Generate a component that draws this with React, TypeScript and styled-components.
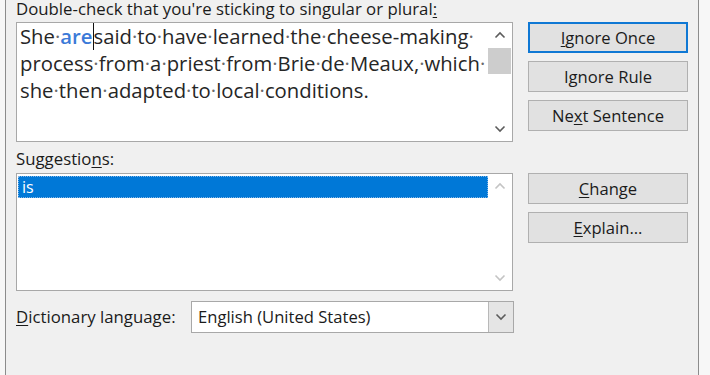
import React from 'react';
import styled, { createGlobalStyle } from 'styled-components';

const GlobalStyle = createGlobalStyle`
  html, body {
    margin: 0;
    padding: 0;
    background: #f7f7f7;
    overflow: hidden;
  }
  body {
    font-family: 'Open Sans', 'Noto Sans', sans-serif;
  }
`;

const Window = styled.div`
  margin-left: 5px;
  width: 694px;
  height: 375px;
  box-sizing: border-box;
  border-left: 1px solid #8c8c8c;
  border-right: 1px solid #8c8c8c;
  background: #f0f0f0;
  padding: 0 0 0 10px;
  color: #1b1b1b;
  font-size: 16px;
`;

const Label = styled.div`
  height: 16px;
  line-height: 16px;
  font-size: 16.8px;
  color: #1b1b1b;
  white-space: nowrap;
`;

const Heading = styled(Label)`
  height: 18px;
  line-height: 18px;
`;

const Key = styled.span`
  text-decoration: underline;
  text-underline-offset: 2px;
`;

const Grid = styled.div<{ $top?: number }>`
  display: grid;
  grid-template-columns: 497px 160px;
  column-gap: 15px;
  margin-top: ${(p) => p.$top ?? 0}px;
`;

const Box = styled.div<{ $height: number }>`
  height: ${(p) => p.$height}px;
  box-sizing: border-box;
  border: 1px solid #a8a8a8;
  background: #ffffff;
  display: flex;
`;

const Content = styled.div`
  flex: 1;
  min-width: 0;
  overflow: hidden;
`;

const Sentence = styled.div`
  padding: 0 0 0 3px;
  font-family: 'Open Sans', 'Noto Sans', sans-serif;
  font-size: 20.3px;
  line-height: 27px;
  color: #262626;
  white-space: nowrap;
`;

const Dot = styled.span`
  color: #6a6a6a;
`;

const Flagged = styled.span`
  color: #3b7ad8;
  font-weight: 600;
  border-right: 1.5px solid #111;
`;

const ScrollBar = styled.div`
  width: 24px;
  display: flex;
  flex-direction: column;
  align-items: stretch;
`;

const Arrow = styled.div<{ $dim?: boolean }>`
  height: 24px;
  display: flex;
  align-items: center;
  justify-content: center;
  color: ${(p) => (p.$dim ? '#c4c4c4' : '#5c5c5c')};
`;

const Thumb = styled.div`
  height: 26px;
  margin: 1px 1px 0 0;
  background: #cdcdcd;
`;

const Track = styled.div`
  flex: 1;
`;

const Buttons = styled.div<{ $top?: number }>`
  display: flex;
  flex-direction: column;
  gap: 8px;
  margin-top: ${(p) => p.$top ?? 0}px;
`;

const Button = styled.div<{ $focused?: boolean }>`
  height: 31px;
  box-sizing: border-box;
  border: ${(p) => (p.$focused ? '2px solid #0f78d4' : '1px solid #b0b0b0')};
  background: #e1e1e1;
  display: flex;
  align-items: center;
  justify-content: center;
  font-size: 16.6px;
  color: #1b1b1b;
`;

const SectionLabel = styled(Label)`
  margin: 9px 0 6px;
`;

const SuggestionRow = styled.div`
  margin: 2px 0 0 1px;
  height: 22px;
  box-sizing: border-box;
  border: 1px dotted #7fb4e6;
  background: #0078d7;
  color: #ffffff;
  font-size: 16px;
  line-height: 20px;
  padding-left: 3px;
`;

const LanguageRow = styled.div`
  display: flex;
  align-items: center;
  margin-top: 10px;
`;

const LanguageLabel = styled(Label)`
  width: 175px;
`;

const Combo = styled.div`
  width: 323px;
  height: 32px;
  box-sizing: border-box;
  border: 1px solid #a8a8a8;
  background: #ffffff;
  display: flex;
`;

const ComboValue = styled.div`
  flex: 1;
  padding-left: 6px;
  line-height: 30px;
  font-size: 16.6px;
  color: #1b1b1b;
`;

const ComboButton = styled.div`
  width: 25px;
  box-sizing: border-box;
  border-left: 1px solid #b8b8b8;
  background: #e5e5e5;
  display: flex;
  align-items: center;
  justify-content: center;
  color: #5c5c5c;
`;

function Chevron({ up }: { up?: boolean }) {
  return (
    <svg width="12" height="8" viewBox="0 0 12 8">
      <path
        d={up ? 'M1.5 6.5 L6 2 L10.5 6.5' : 'M1.5 1.5 L6 6 L10.5 1.5'}
        fill="none"
        stroke="currentColor"
        strokeWidth="1.6"
      />
    </svg>
  );
}

// word-processor style: spaces shown as formatting dots
function Words({ text }: { text: string }) {
  const parts = text.split(' ');
  return (
    <>
      {parts.map((w, i) => (
        <React.Fragment key={i}>
          {w}
          {i < parts.length - 1 && <Dot>·</Dot>}
        </React.Fragment>
      ))}
    </>
  );
}

export default function App() {
  return (
    <Window>
      <GlobalStyle />
      <Heading>
        Double-check that you're sticking to singular or plural<Key>:</Key>
      </Heading>
      <Grid $top={4}>
        <Box $height={120}>
          <Content>
            <Sentence>
              She<Dot>·</Dot>
              <Flagged>are</Flagged>
              <Words text="said to have learned the cheese-making " />
              <br />
              <Words text="process from a priest from Brie de Meaux, which " />
              <br />
              <Words text="she then adapted to local conditions." />
            </Sentence>
          </Content>
          <ScrollBar>
            <Arrow>
              <Chevron up />
            </Arrow>
            <Thumb />
            <Track />
            <Arrow>
              <Chevron />
            </Arrow>
          </ScrollBar>
        </Box>
        <Buttons>
          <Button $focused>
            <span>
              <Key>I</Key>gnore Once
            </span>
          </Button>
          <Button>
            <span>
              I<Key>g</Key>nore Rule
            </span>
          </Button>
          <Button>
            <span>
              Ne<Key>x</Key>t Sentence
            </span>
          </Button>
        </Buttons>
      </Grid>
      <Grid>
        <div>
          <SectionLabel>
            Suggestio<Key>n</Key>s:
          </SectionLabel>
          <Box $height={118}>
            <Content>
              <SuggestionRow>is</SuggestionRow>
            </Content>
            <ScrollBar>
              <Arrow $dim>
                <Chevron up />
              </Arrow>
              <Track />
              <Arrow $dim>
                <Chevron />
              </Arrow>
            </ScrollBar>
          </Box>
        </div>
        <Buttons $top={31}>
          <Button>
            <span>
              <Key>C</Key>hange
            </span>
          </Button>
          <Button>
            <span>
              <Key>E</Key>xplain...
            </span>
          </Button>
        </Buttons>
      </Grid>
      <LanguageRow>
        <LanguageLabel>
          <Key>D</Key>ictionary language:
        </LanguageLabel>
        <Combo>
          <ComboValue>English (United States)</ComboValue>
          <ComboButton>
            <Chevron />
          </ComboButton>
        </Combo>
      </LanguageRow>
    </Window>
  );
}
